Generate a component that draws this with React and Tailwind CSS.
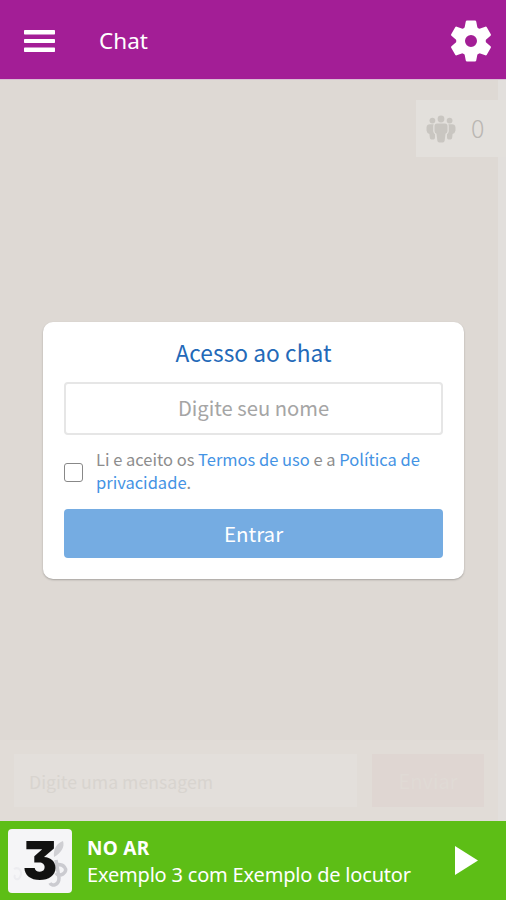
import React from "react";

const latin = "font-['Noto_Sans',sans-serif]";
const soft = "font-['Noto_Sans_CJK_SC',sans-serif]";

function GearIcon() {
  const tooth = "M-4 -19.300H4L5.600 -11H-5.600Z";
  return (
    <svg viewBox="-21 -21 42 42" className="ml-auto size-[42px]" fill="white" stroke="white" strokeWidth="2.500" strokeLinejoin="round">
      <circle r="10.400" fill="none" strokeWidth="8.800" />
      {[0, 60, 120, 180, 240, 300].map((angle) => (
        <path key={angle} d={tooth} transform={`rotate(${angle})`} />
      ))}
    </svg>
  );
}

function PeopleIcon() {
  return (
    <svg viewBox="0 0 30 28" className="h-7 w-[30px]" fill="#c9c6c1">
      <circle cx="15" cy="4" r="3.4" />
      <circle cx="6.4" cy="5.6" r="2.9" />
      <circle cx="23.6" cy="5.6" r="2.9" />
      <path d="M11 8.500h8q2.500 0 2.500 2.500v5q0 2-2 2.800l-.8 6.700q-.3 2-2 2h-3.400q-1.700 0-2-2l-.8-6.700q-2-.8-2-2.800v-5Q8.500 8.500 11 8.500Z" />
      <path d="M4 9.300h3.700q-.5 1-.5 2v5q.3 2 1.800 3v3.200q0 2-1.500 2h-2q-1.500 0-1.700-2l-.4-3.500Q.8 18 .5 15.500v-3Q.8 9.300 4 9.300Z" />
      <path d="M26 9.300h-3.700q.5 1 .5 2v5q-.3 2-1.800 3v3.200q0 2 1.500 2h2q1.500 0 1.700-2l.4-3.500q2.600-1 2.900-3.500v-3q-.3-3.200-3.500-3.200Z" />
    </svg>
  );
}

function Header() {
  return (
    <header className="flex h-[79px] shrink-0 items-center bg-[#a31e96] pl-6 pr-[14px] pb-px pt-1">
      <svg viewBox="0 0 31 22" className="h-[22px] w-[31px]" fill="white">
        <rect width="31" height="4.500" rx="0.700" />
        <rect y="8.900" width="31" height="4" rx="0.700" />
        <rect y="17.500" width="31" height="4.500" rx="0.700" />
      </svg>
      <h1 className={`ml-11 text-[22.500px] leading-8 text-white ${latin}`}>Chat</h1>
      <GearIcon />
    </header>
  );
}

function AccessCard() {
  return (
    <section className={`ml-[43px] h-[257px] w-[421px] rounded-[10px] bg-white px-[21px] shadow-[0_1px_2px_rgba(0,0,0,0.25)] ${soft}`}>
      <h2 className="pt-[13px] text-center text-[22.700px] leading-9 tracking-[0.050px] text-[#2369b8]">Acesso ao chat</h2>
      <div className="mt-[11px] flex h-[53px] items-center justify-center rounded-[4px] border-2 border-[#e6e6e6] text-[20.200px] text-[#a5a5a5]">
        Digite seu nome
      </div>
      <div className="mt-[13px] flex h-[48px] items-center">
        <span className="size-[19px] shrink-0 rounded-[3px] border-[1.500px] border-[#888]" />
        <p className="-mt-[2px] ml-[13px] whitespace-nowrap text-[16.500px] leading-[23px] text-[#8d8d8d]">
          Li e aceito os <span className="text-[#4493e4]">Termos de uso</span> e a{" "}
          <span className="text-[#4493e4]">Política de<br />privacidade</span>.
        </p>
      </div>
      <div className="mt-[13px] flex h-[49px] items-center justify-center rounded-[4px] bg-[#75ace2] text-[20.500px] text-white">
        Entrar
      </div>
    </section>
  );
}

function Player() {
  return (
    <footer className={`flex h-[79px] shrink-0 items-center bg-[#5dbe16] pl-2 pr-7 text-white ${latin}`}>
      <div className="relative flex size-16 shrink-0 items-center justify-center rounded-[4px] bg-[#f5f5f7]">
        <svg viewBox="0 0 64 64" className="absolute inset-0" fill="none">
          <path d="M46 28C45 20 49 14 55 12c2 6-2 12-9 16Z" fill="#cfcfd3" />
          <path d="M47 36c9-2 14 5 8 9-3 2-6 1-7-1M48 31l3 18c0 7-7 9-9 5" stroke="#cbcbd0" strokeWidth="3.500" />
          <path d="M6 40c5-3 9 3 6 8-2 4-7 2-5-2" stroke="#ececf0" strokeWidth="2" />
        </svg>
        <span className="relative font-['Inter',sans-serif] text-[52px] font-black leading-none text-[#111] [font-feature-settings:'cv09']">3</span>
      </div>
      <div className="ml-[15px] whitespace-nowrap">
        <div className="pt-px text-[19px] font-bold leading-[26px] tracking-[0.300px]">NO AR</div>
        <div className="pt-px text-[20px] leading-[26px] tracking-[-0.190px]">Exemplo 3 com Exemplo de locutor</div>
      </div>
      <svg viewBox="0 0 23 29" className="ml-auto h-[29px] w-[23px] shrink-0" fill="white">
        <path d="M0 0 23 14.500 0 29Z" />
      </svg>
    </footer>
  );
}

export default function App() {
  return (
    <div className="flex h-[900px] w-[506px] flex-col overflow-hidden bg-[#ded9d4]">
      <Header />
      <main className="flex min-h-0 flex-1 flex-col border-t border-[#d9bdd3] bg-[linear-gradient(to_right,#ded9d4_498px,#e2dfdc_498px)]">
        <div className={`ml-auto mt-5 flex h-[57px] w-[90px] items-center bg-[#e3e0dc] pl-[10px] ${soft}`}>
          <PeopleIcon />
          <span className="ml-[15px] pb-[3px] text-[25px] font-light leading-8 text-[#bab7b3]">0</span>
        </div>
        <div className="mt-[165px] flex">
          <AccessCard />
        </div>
        <div className={`mt-auto flex h-[81px] w-[498px] items-center gap-[15px] bg-[#e1dcd7] pl-[14px] ${soft}`}>
          <div className="flex h-[53px] w-[343px] items-center bg-[#e3dfdb] pl-[15px] pt-[2px] text-[17.700px] text-[#d8d4cf]">
            Digite uma mensagem
          </div>
          <div className="flex h-[53px] w-[112px] items-center justify-center bg-[#dfd6d2] text-[20px] text-[#e0dad5]">
            Enviar
          </div>
        </div>
      </main>
      <Player />
    </div>
  );
}
